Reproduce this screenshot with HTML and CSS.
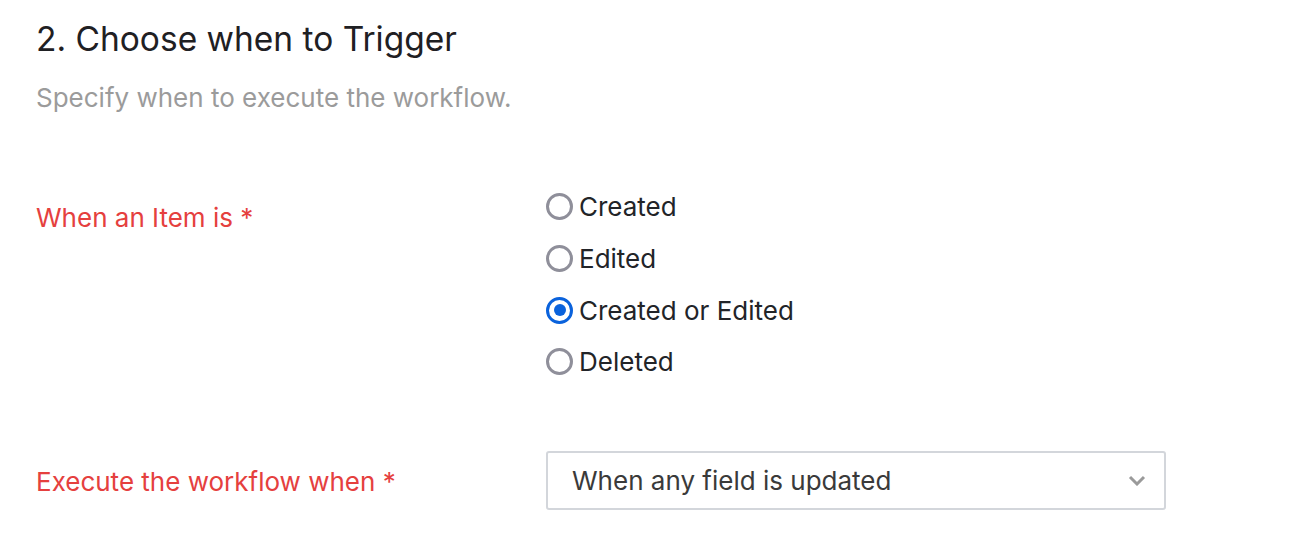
FILE: index.html
```html
<!DOCTYPE html>
<html lang="en">
<head>
<meta charset="utf-8">
<title>Choose when to Trigger</title>
<link rel="stylesheet" href="styles.css">
</head>
<body>
<main class="section">
  <h2 class="title">2. Choose when to Trigger</h2>
  <p class="subtitle">Specify when to execute the workflow.</p>

  <div class="row row-radios">
    <div class="label">When an Item is *</div>
    <div class="radios">
      <label class="radio"><span class="dot"></span><span class="radio-text">Created</span></label>
      <label class="radio"><span class="dot"></span><span class="radio-text">Edited</span></label>
      <label class="radio checked"><span class="dot"></span><span class="radio-text">Created or Edited</span></label>
      <label class="radio"><span class="dot"></span><span class="radio-text">Deleted</span></label>
    </div>
  </div>

  <div class="row row-select">
    <div class="label">Execute the workflow when *</div>
    <div class="select">
      <span class="select-text">When any field is updated</span>
      <svg class="chevron" width="18" height="11" viewBox="0 0 18 11"><path d="M2 2 L9 9 L16 2" fill="none" stroke="#9a9a9a" stroke-width="3"/></svg>
    </div>
  </div>
</main>
</body>
</html>
```

FILE: styles.css
```css
* { box-sizing: border-box; }
html, body { margin: 0; padding: 0; background: #fff; }
body { font-family: Inter, "Noto Sans", sans-serif; }

.section { padding: 18px 0 0 36px; }

.title {
  margin: 0;
  font-size: 33.5px;
  font-weight: 400;
  line-height: 42px;
  color: #1f2023;
}

.subtitle {
  margin: 23px 0 0;
  font-size: 26px;
  line-height: 30px;
  color: #9b9b9b;
}

.row {
  display: grid;
  grid-template-columns: 510px 620px;
  align-items: start;
}

.row-radios { margin-top: 68px; }

.label {
  font-size: 26px;
  line-height: 30px;
  color: #e5403e;
}

.row-radios .label { padding-top: 22px; }

.radios { display: flex; flex-direction: column; }

.radio {
  display: flex;
  align-items: center;
  height: 51.7px;
  font-size: 26px;
  color: #222428;
}

.dot {
  width: 27px;
  height: 27px;
  border-radius: 50%;
  border: 3px solid #8f8f9a;
  margin-right: 6px;
  display: flex;
  align-items: center;
  justify-content: center;
  flex: none;
}

.radio.checked .dot { border-color: #0a62dc; }
.radio.checked .dot::after {
  content: "";
  width: 12px;
  height: 12px;
  border-radius: 50%;
  background: #0a62dc;
}

.row-select { margin-top: 63px; }
.row-select .label { padding-top: 16px; }

.select {
  width: 620px;
  height: 59px;
  border: 2px solid #d3d6db;
  border-radius: 3px;
  display: flex;
  align-items: center;
  justify-content: space-between;
  padding: 0 18px 0 24px;
}

.select-text {
  font-size: 26px;
  color: #3a3a3a;
}

.chevron { display: block; }
```
